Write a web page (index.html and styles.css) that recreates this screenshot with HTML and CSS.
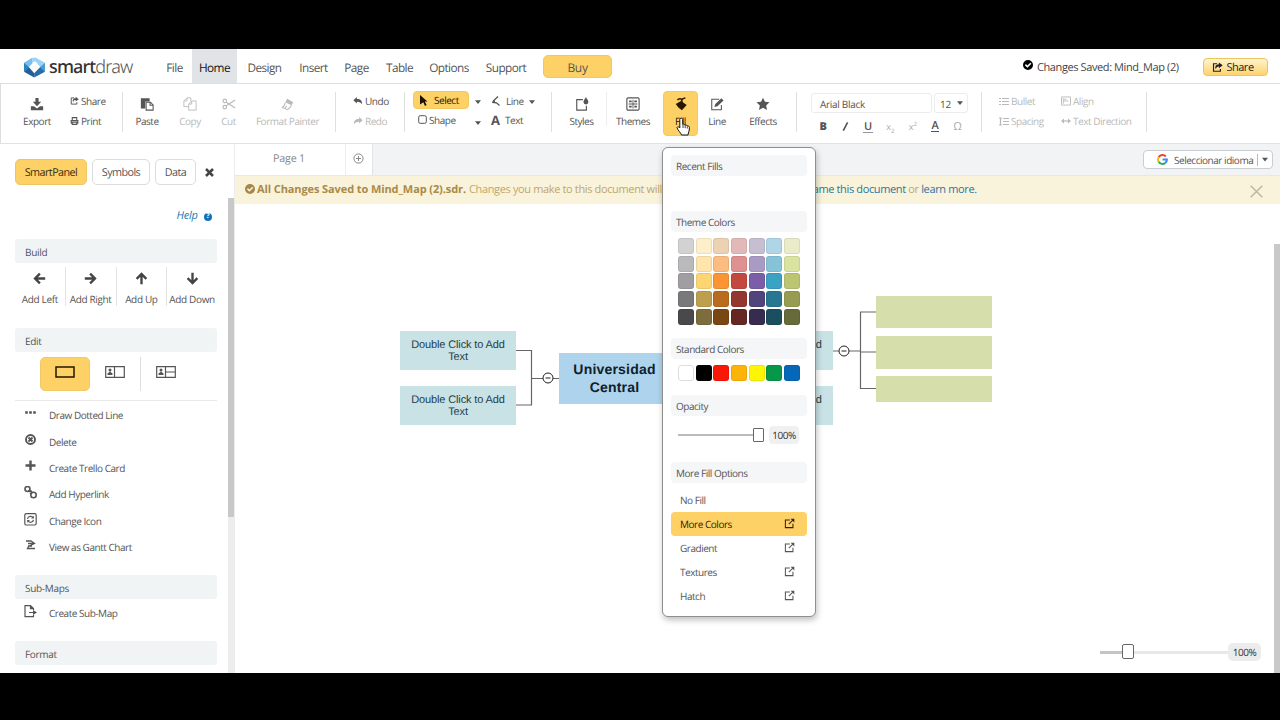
FILE: index.html
```html
<!DOCTYPE html>
<html lang="en">
<head>
<meta charset="utf-8">
<title>SmartDraw - Mind_Map (2)</title>
<link rel="stylesheet" href="styles.css">
</head>
<body>
<svg class="defs" width="0" height="0">
  <symbol id="share" viewBox="0 0 16 16"><path d="M7.5 2.5H2.2v11h10V10" fill="none" stroke="currentColor" stroke-width="1.7"/><path d="M10 .6l5.6 4.2L10 9V6.4C7.5 6.4 6 7.5 5.7 10.6 3.6 6.800 5.5 3.300 10 3.200z" fill="currentColor"/></symbol>
  <symbol id="open" viewBox="0 0 16 16"><path d="M8.500 3H2v11h11V8.500M7 9l7-7" fill="none" stroke="currentColor" stroke-width="1.500"/><path d="M9.500 1H15v5.500z" fill="currentColor"/></symbol>
  <symbol id="check" viewBox="0 0 16 16"><path fill-rule="evenodd" d="M8 0a8 8 0 100 16A8 8 0 008 0zM7 12.200L3 8.200l1.700-1.700L7 8.800l4.700-4.600 1.700 1.700z" fill="currentColor"/></symbol>
  <symbol id="minus" viewBox="0 0 12 12"><circle cx="6" cy="6" r="5" fill="#fff" stroke="#222"/><path d="M3.500 6h5" stroke="#222"/></symbol>
  <symbol id="arrow" viewBox="0 0 16 16"><path d="M8.500 2L2.500 8l6 6M3 8h12" fill="none" stroke="currentColor" stroke-width="2.900"/></symbol>
  <symbol id="caret" viewBox="0 0 8 5"><path d="M0 0h8L4 5z" fill="currentColor"/></symbol>
  <symbol id="undo" viewBox="0 0 16 14"><path d="M6 0v3.300c6.500 0 9.500 2.500 9 10-1.500-4-4-5.300-9-5.200v3.400L0 5.700z" fill="currentColor"/></symbol>
</svg>
<div class="screen">
  <header class="topbar">
    <div class="brand">
      <svg width="21" height="21" viewBox="0 0 22 21">
        <path d="M0 5.500l9-5.500v6L5 10z" fill="#77bff0"/><path d="M0 5.500L5.300 10 0 15z" fill="#2d83bd"/><path d="M0 15l5-5 5.700 6.500V21z" fill="#205f98"/>
        <path d="M22 5.500L12 0 9 .5V5l3-1 5 6z" fill="#9bd3f6"/><path d="M22 5.500L16.700 10l5.300 5z" fill="#4a9ed6"/><path d="M22 15l-5-5-6.300 6.500V21z" fill="#286da8"/>
      </svg>
      <span class="word"><b>smart</b>draw</span>
    </div>
    <nav class="menu">
      <a class="w35">File</a><a class="w45 on">Home</a><a class="w55">Design</a><a class="w43">Insert</a><a class="w43">Page</a><a class="w43">Table</a><a class="w56">Options</a><a class="w58">Support</a>
    </nav>
    <a class="buy">Buy</a>
    <div class="saved"><svg width="10" height="10"><use href="#check"/></svg><span>Changes Saved: Mind_Map (2)</span></div>
    <a class="share-btn"><svg width="11" height="11"><use href="#share"/></svg>Share</a>
  </header>

  <div class="ribbon">
    <div class="tile t-export"><svg width="14" height="14" viewBox="0 0 16 16"><path d="M6.200 1h3.600v4.500h3L8 10.500l-4.800-5h3zM1 10.500h3.500L8 13l3.500-2.500H15V15H1z" fill="currentColor"/></svg>Export</div>
    <div class="stack s-share">
      <span><svg width="9" height="10"><use href="#share"/></svg>Share</span>
      <span><svg width="9" height="10" viewBox="0 0 16 16"><path d="M4 7V2h8v5M2 12V7h12v5h-2M4 10h8v4H4zM2 12h2" fill="none" stroke="currentColor" stroke-width="1.900"/></svg>Print</span>
    </div>
    <i class="sep"></i>
    <div class="tile t-paste"><svg width="14" height="14" viewBox="0 0 16 16"><path d="M1 1.500h10V5H6v8H1z" fill="currentColor"/><path d="M7 6h5l3 3v6H7zM11.500 6v3.500H15" fill="#fff" stroke="currentColor" stroke-width="1.200"/></svg>Paste</div>
    <div class="tile t-copy dim"><svg width="14" height="14" viewBox="0 0 16 16"><path d="M6 11H1V4.500L4.500 1H9v4M4.500 1v3.500H1M6.500 8L10 4.500h5V15H6.500zM10 4.500V8H6.500" fill="none" stroke="currentColor"/></svg>Copy</div>
    <div class="tile t-cut dim"><svg width="14" height="14" viewBox="0 0 16 16"><path d="M15 3.500L5 10M15 12.500L5 6" stroke="currentColor" stroke-width="1.400"/><circle cx="3.200" cy="4.500" r="2" fill="none" stroke="currentColor" stroke-width="1.300"/><circle cx="3.200" cy="11.500" r="2" fill="none" stroke="currentColor" stroke-width="1.300"/></svg>Cut</div>
    <div class="tile t-painter dim"><svg width="14" height="14" viewBox="0 0 16 16"><path d="M7 2l7 4-2 3.500L5 6z" fill="currentColor"/><path d="M5 6.500C4.500 9 3 11 1.500 12l6 2.500C9.500 13 11 11.500 12 9.500M4.500 13l2-2.500" fill="none" stroke="currentColor" stroke-width="1.200"/></svg>Format Painter</div>
    <i class="sep"></i>
    <div class="stack s-undo">
      <span><svg width="10" height="8"><use href="#undo"/></svg>Undo</span>
      <span class="dim"><svg class="mirror" width="10" height="8"><use href="#undo"/></svg>Redo</span>
    </div>
    <i class="sep"></i>
    <div class="tools">
      <span class="select"><svg width="8" height="11" viewBox="0 0 8 11"><path d="M0 0l7.500 6.500H4.800L6.600 10 5 11 3.300 7.300 0 9.500z" fill="#1a1000"/></svg>Select</span>
      <svg class="dd" width="6" height="4"><use href="#caret"/></svg>
      <span class="tl"><svg width="10" height="10" viewBox="0 0 10 10"><path d="M7 .5L2.500 4.800 2 6.500l3.500.3 3 2.700" fill="none" stroke="currentColor" stroke-width="1.300"/><path d="M.8 6.800l2.500-3.300 1.200 3.600z" fill="currentColor"/></svg>Line</span>
      <svg class="dd" width="6" height="4"><use href="#caret"/></svg>
      <span class="shape"><svg width="9" height="9" viewBox="0 0 9 9"><rect x=".7" y=".7" width="7.600" height="7.600" rx="1.500" fill="none" stroke="currentColor"/></svg>Shape</span>
      <svg class="dd low" width="6" height="4"><use href="#caret"/></svg>
      <span class="tl"><b class="bigA">A</b>Text</span>
    </div>
    <i class="sep"></i>
    <div class="tile t-styles"><svg width="14" height="14" viewBox="0 0 16 16"><path d="M9 3H2v12h11v-5" fill="none" stroke="currentColor" stroke-width="1.300"/><path d="M12.500 0c1 2.500 2.800 3.500 2.800 5.700a2.800 2.800 0 01-5.600 0C9.700 3.500 11.500 2.500 12.500 0z" fill="currentColor"/></svg>Styles</div>
    <i class="sep short"></i>
    <div class="tile t-themes"><svg width="14" height="14" viewBox="0 0 16 16"><rect x="1" y="1" width="14" height="14" rx="1.500" fill="none" stroke="currentColor" stroke-width="1.300"/><path d="M3.500 4h3v2h-3zM9.500 4h3v2h-3zM3.500 10h3v2h-3zM9.500 10h3v2h-3zM7.500 3h1v10h-1zM3 7.500h10v1H3z" fill="currentColor"/></svg>Themes</div>
    <div class="tile t-fill"><svg width="14" height="14" viewBox="0 0 16 16"><path d="M2 8l6-3.500L14.500 9 9 15l-4-3z" fill="currentColor"/><path d="M9 7V4c0-3-4-2.500-5-.5M9 4c0-2 2-3 4-2.500" fill="none" stroke="currentColor" stroke-width="1.700"/></svg>Fill</div>
    <div class="tile t-line"><svg width="14" height="14" viewBox="0 0 16 16"><path d="M10.500 2.500H2v12h11V9" fill="none" stroke="currentColor" stroke-width="1.200"/><path d="M5 11.500l1-3.500 7-6.500L15.500 4l-7 6.500zM6 8l2.500 2.500" fill="currentColor"/></svg>Line</div>
    <div class="tile t-effects"><svg width="14" height="14" viewBox="0 0 16 16"><path d="M8 .8l2.200 4.700 5.200.6-3.800 3.600 1 5.200L8 12.400l-4.600 2.500 1-5.200L.6 6.100l5.200-.6z" fill="currentColor"/></svg>Effects</div>
    <i class="sep"></i>
    <div class="fonts">
      <div class="pick"><span class="fam">Arial Black</span><span class="size">12<svg width="6" height="4"><use href="#caret"/></svg></span></div>
      <div class="fmt"><b>B</b><span><svg class="slash" width="7" height="9" viewBox="0 0 7 9"><path d="M1.300 8.700L5.600.4" stroke="currentColor" stroke-width="1.600"/></svg></span><span class="un">U</span><span class="lo">x<sub>2</sub></span><span class="lo">x<sup>2</sup></span><span class="ac">A</span><span class="om">Ω</span></div>
    </div>
    <i class="sep"></i>
    <div class="para dim">
      <span><svg width="10" height="9" viewBox="0 0 10 9"><path d="M0 1.500h2M0 4.500h2M0 7.500h2M3 1.500h7M3 4.500h7M3 7.500h7" stroke="currentColor" stroke-width="1.200"/></svg>Bullet</span>
      <span><svg width="10" height="10" viewBox="0 0 11 10"><path d="M.5.500h10v9H.5zM2.500 2v6M3 5h5M3 3h3" fill="none" stroke="currentColor"/></svg>Align</span>
      <span><svg width="10" height="9" viewBox="0 0 10 9"><path d="M0 1h3M0 8h3M1.500 1v7M4 1.500h6M4 4.500h6M4 7.500h6" stroke="currentColor" stroke-width="1.200"/></svg>Spacing</span>
      <span><svg width="10" height="6" viewBox="0 0 10 6"><path d="M1 3h8" stroke="currentColor" stroke-width="1.200"/><path d="M0 3l3-2.500v5zM10 3L7 .5v5z" fill="currentColor"/></svg>Text Direction</span>
    </div>
    <i class="sep"></i>
  </div>

  <div class="body">
    <aside class="panel">
      <div class="panel-in">
        <div class="tabs"><a class="on w72">SmartPanel</a><a class="w58">Symbols</a><a class="w41">Data</a><svg width="9" height="9" viewBox="0 0 9 9"><path d="M1 1l7 7M8 1L1 8" stroke="#444" stroke-width="2.500"/></svg></div>
        <div class="help">Help <b>?</b></div>
        <h3>Build</h3>
        <div class="adds">
          <div><svg width="13" height="13"><use href="#arrow"/></svg>Add Left</div>
          <div><svg class="r180" width="13" height="13"><use href="#arrow"/></svg>Add Right</div>
          <div><svg class="r90" width="13" height="13"><use href="#arrow"/></svg>Add Up</div>
          <div><svg class="r270" width="13" height="13"><use href="#arrow"/></svg>Add Down</div>
        </div>
        <h3>Edit</h3>
        <div class="kinds">
          <div class="on"><svg width="20" height="12" viewBox="0 0 20 12"><path d="M1 1h18v10H1z" fill="none" stroke="#221800" stroke-width="1.500"/></svg></div>
          <div><svg width="20" height="12" viewBox="0 0 20 12"><path d="M.7.7h18.600v10.600H.7zM9.500.7v10.600" fill="none" stroke="#555" stroke-width="1.200"/><circle cx="5" cy="4" r="1.500" fill="#555"/><path d="M2.500 9V7.500L5 5.500l2.500 2V9z" fill="#555"/></svg></div>
          <div class="last"><svg width="20" height="12" viewBox="0 0 20 12"><path d="M.7.7h18.600v10.600H.7zM9.500.7v10.600M9.500 6h10" fill="none" stroke="#555" stroke-width="1.200"/><circle cx="5" cy="4" r="1.500" fill="#555"/><path d="M2.500 9V7.500L5 5.500l2.500 2V9z" fill="#555"/></svg></div>
        </div>
        <ul class="acts">
          <li><svg width="13" height="13" viewBox="0 0 13 13"><path d="M1.200 5.500h2.600M5.200 5.500h2.600M9.200 5.500h2.600" stroke="currentColor" stroke-width="2.400"/></svg>Draw Dotted Line</li>
          <li><svg width="13" height="13" viewBox="0 0 13 13"><circle cx="6.500" cy="5.500" r="4.500" fill="none" stroke="currentColor" stroke-width="1.900"/><path d="M4.500 3.500l4 4M8.500 3.500l-4 4" stroke="currentColor" stroke-width="1.800"/></svg>Delete</li>
          <li><svg width="13" height="13" viewBox="0 0 13 13"><path d="M6.500.5v10M1.500 5.500h10" stroke="currentColor" stroke-width="2.400"/></svg>Create Trello Card</li>
          <li><svg width="13" height="13" viewBox="0 0 13 13"><g fill="none" stroke="currentColor" stroke-width="1.600"><circle cx="3.500" cy="3" r="2.500"/><circle cx="9.500" cy="9" r="2.700"/><path d="M4.500 4l2 2M6 8l2-1.500M6.500 4.500L8 6"/></g></svg>Add Hyperlink</li>
          <li><svg width="13" height="13" viewBox="0 0 13 13"><g fill="none" stroke="currentColor" stroke-width="1.200"><rect x=".8" y=".6" width="11.400" height="11.400" rx="1.500"/><path d="M3.500 5.800C4 2.800 8 2.600 9.200 4.800M9.500 6.800c-.5 3-4.500 3.200-5.700 1"/></g><path d="M9.800 2.800v2.800H7zM3.200 9.800V7H6z" fill="currentColor"/></svg>Change Icon</li>
          <li><svg width="13" height="13" viewBox="0 0 13 13"><path d="M2 2h5.500M4 4.500h6M4 7h4M5 9.500h6M7 2l3.500 2.500L4.500 7.500 3.500 9.500H6" fill="none" stroke="currentColor" stroke-width="1.300"/></svg>View as Gantt Chart</li>
        </ul>
        <h3 class="sub">Sub-Maps</h3>
        <ul class="acts one">
          <li><svg width="13" height="13" viewBox="0 0 13 13"><path d="M9.500 5V3.500L6.500.6H1v11h8.500V10M6.500.6v3h3M5 7.500h5" fill="none" stroke="currentColor" stroke-width="1.200"/><path d="M9 5l4 2.500L9 10z" fill="currentColor"/></svg>Create Sub-Map</li>
        </ul>
        <h3 class="fmt-h">Format</h3>
      </div>
      <div class="rail"><div class="thumb"></div></div>
    </aside>

    <main class="work">
      <div class="pages">
        <div class="page-tab"><span>Page 1</span><span class="plus"><svg width="11" height="11" viewBox="0 0 11 11"><circle cx="5.500" cy="5.500" r="4.600" fill="none" stroke="#888"/><path d="M5.500 3v5M3 5.500h5" stroke="#888"/></svg></span></div>
        <div class="lang"><svg width="11" height="11" viewBox="0 0 11 11"><g fill="none" stroke-width="2"><path d="M8.800 2.500A4.400 4.400 0 001.700 3.200" stroke="#ea4335"/><path d="M1.700 3.200a4.400 4.400 0 000 4.600" stroke="#fbbc05"/><path d="M1.700 7.800a4.400 4.400 0 006.600 1.100" stroke="#34a853"/><path d="M8.300 8.900A4.400 4.400 0 009.900 5.500H5.600" stroke="#4285f4"/></g></svg><span>Seleccionar idioma</span><i></i><svg width="6" height="5"><use href="#caret"/></svg></div>
      </div>
      <div class="notice">
        <svg width="10" height="10"><use href="#check"/></svg>
        <b>All Changes Saved to Mind_Map (2).sdr.</b><span class="n1">Changes you make to this document will be saved.</span><span class="n2"><em>Rename this document</em> or <em>learn more.</em></span>
        <svg class="x" width="13" height="13" viewBox="0 0 13 13"><path d="M.7.7l11.600 11.600M12.300.7L.7 12.300" stroke="#bdb8a0" stroke-width="1.500"/></svg>
      </div>
      <div class="canvas">
        <svg class="wires" width="1040" height="468"><path d="M281 146.500h15.500v54.500h-15.500M296.500 174.500h28M598 147h28M641 184.500h-15.500v-76.500h15.500M625.500 148h15.500" fill="none" stroke="#666" stroke-width="1.200"/></svg>
        <div class="node teal a">Double Click to Add Text</div>
        <div class="node teal b">Double Click to Add Text</div>
        <div class="node root">Universidad Central</div>
        <div class="node teal c">Double Click to Add Text</div>
        <div class="node teal d">Double Click to Add Text</div>
        <div class="node green e"></div><div class="node green f"></div><div class="node green g"></div>
        <svg class="col m1" width="12" height="12"><use href="#minus"/></svg>
        <svg class="col m2" width="12" height="12"><use href="#minus"/></svg>
        <div class="zoom"><div class="track"><i></i></div><span>100%</span></div>
        <div class="vbar"></div>
      </div>
    </main>
  </div>

  <div class="fillmenu">
    <h4>Recent Fills</h4>
    <h4 class="h-theme">Theme Colors</h4>
    <div class="sw">
      <i style="background:#d2d2d3"></i><i style="background:#fdefc9"></i><i style="background:#ecd2b3"></i><i style="background:#e3b8b8"></i><i style="background:#c6bfd1"></i><i style="background:#aed6e7"></i><i style="background:#e9ebc9"></i>
      <i style="background:#bab9bc"></i><i style="background:#fde5ab"></i><i style="background:#fcbd83"></i><i style="background:#df9090"></i><i style="background:#aa9bc5"></i><i style="background:#86c3d9"></i><i style="background:#dbe3a0"></i>
      <i style="background:#a09da3"></i><i style="background:#fdd573"></i><i style="background:#fb9432"></i><i style="background:#c44740"></i><i style="background:#7c5da7"></i><i style="background:#3aa3c4"></i><i style="background:#bcc572"></i>
      <i style="background:#79797b"></i><i style="background:#bd9f4d"></i><i style="background:#bb6b1e"></i><i style="background:#943630"></i><i style="background:#51437b"></i><i style="background:#287792"></i><i style="background:#979c51"></i>
      <i style="background:#49494b"></i><i style="background:#7d6c3c"></i><i style="background:#794713"></i><i style="background:#652724"></i><i style="background:#372c50"></i><i style="background:#1b4e60"></i><i style="background:#676a39"></i>
    </div>
    <h4 class="h-std">Standard Colors</h4>
    <div class="sw std"><i class="white"></i><i style="background:#000"></i><i style="background:#fb1705"></i><i style="background:#fdb307"></i><i style="background:#fdf602"></i><i style="background:#079748"></i><i style="background:#0667b9"></i></div>
    <h4 class="h-op">Opacity</h4>
    <div class="opacity"><div class="otrack"><i></i></div><span>100%</span></div>
    <h4 class="h-more">More Fill Options</h4>
    <div class="opts">
      <div>No Fill</div>
      <div class="on">More Colors<svg width="11" height="11"><use href="#open"/></svg></div>
      <div>Gradient<svg width="11" height="11"><use href="#open"/></svg></div>
      <div>Textures<svg width="11" height="11"><use href="#open"/></svg></div>
      <div>Hatch<svg width="11" height="11"><use href="#open"/></svg></div>
    </div>
  </div>
  <svg class="cursor" width="15" height="19" viewBox="0 0 15 19"><path d="M4.500 1.500c1.500-.8 2.200.2 2.200 1v5c1-.8 2 0 2.200.7 1-.6 2 0 2.200.8 1.500-.5 2.300.5 2.300 1.500 0 4-1 4.500-1.400 7.500H5.500C5 16 1.500 13 1 10.500c.8-1.500 2-.5 2.800.5V2.500c0-.5.200-.8.7-1z" fill="#fff" stroke="#111"/><path d="M7 8v3M9.200 8.500v2.700M11.300 9.500v2" stroke="#111" stroke-width=".8"/></svg>
</div>
</body>
</html>
```
FILE: styles.css
```css
* { box-sizing: border-box; }
body {
  margin: 0; width: 1280px; height: 720px; overflow: hidden; background: #000;
  font-family: "Open Sans", "Noto Sans", sans-serif; text-rendering: geometricPrecision;
  font-size: 10px; letter-spacing: -.47px; color: #555; white-space: nowrap;
}
h3, h4, ul { margin: 0; padding: 0; font-weight: 400; font-size: 10px; list-style: none; }
svg { display: block; flex: none; }
.defs { position: absolute; }
.screen { position: relative; display: flex; flex-direction: column; height: 720px; padding: 49px 0 47px; }
.dim { color: #b9b9b9; }
.w35 { width: 35px; } .w41 { width: 41px; } .w43 { width: 43px; } .w45 { width: 45px; }
.w55 { width: 55px; } .w56 { width: 56px; } .w58 { width: 58px; } .w72 { width: 72px; }

/* top bar */
.topbar { display: flex; flex: none; height: 35px; background: #fff; border-bottom: 1px solid #dcdee0; }
.brand { display: flex; align-items: center; width: 157px; padding: 3px 0 0 24px; gap: 4px; }
.word { font-family: "Noto Sans", sans-serif; font-size: 18px; line-height: 20px; letter-spacing: -.85px; color: #555; font-weight: 300; padding-bottom: 2px; }
.word b { font-weight: 500; color: #333; }
.menu { display: flex; width: 386px; }
.menu a { text-align: center; line-height: 38px; height: 34px; font-size: 11.800px; letter-spacing: -.57px; }
.menu .on { background: #e1e4e6; color: #111; }
.buy { width: 69px; height: 23px; margin-top: 6px; border-radius: 5px; background: #fed166; border: 1px solid #f3c75d; text-align: center; line-height: 23px; font-size: 12px; letter-spacing: -.3px; }
.saved { display: flex; width: 571px; height: 34px; padding-left: 411px; gap: 4px; font-size: 11px; line-height: 38px; letter-spacing: -.4px; color: #444; }
.saved svg { margin-top: 11px; color: #000; }
.share-btn { display: flex; align-items: center; justify-content: center; gap: 3px; width: 65px; height: 18px; margin: 9px 0 0 20px; border: 1px solid #ecc45f; border-radius: 4px; background: linear-gradient(#fff3cf, #fdd46e); color: #222; font-size: 11px; padding-right: 5px; }

/* ribbon */
.ribbon { display: flex; flex: none; height: 60px; background: #fff; border-bottom: 1px solid #e0e2e4; border-left: 1px solid #ddd; padding-top: 7px; }
.tile { display: flex; flex-direction: column; align-items: center; height: 45px; padding-top: 6px; gap: 3px; line-height: 14px; }
.sep { width: 1px; height: 40px; margin-top: 1px; background: #dedfe0; }
.sep.short { height: 34px; background: #eee; }
.t-export { width: 72px; }
.stack { display: flex; flex-direction: column; gap: 6px; padding-top: 3px; }
.stack span { display: flex; align-items: center; gap: 2px; height: 14px; }
.s-share { width: 49px; margin-left: -3px; }
.s-share + .sep { margin-left: 3px; }
.t-paste { width: 48px; }
.t-copy { width: 38px; }
.t-cut { width: 39px; }
.t-painter { width: 79px; margin-right: 8px; }
.s-undo { width: 68px; padding-left: 17px; }
.mirror { transform: scaleX(-1); }
.tools { display: grid; grid-template-columns: 56px 18px 36px 17px; grid-template-rows: 18px 21px; width: 146px; padding-left: 8px; align-items: center; justify-content: start; }
.tools span { display: flex; align-items: center; gap: 3px; }
.tools .select { height: 18px; padding-left: 6px; gap: 6px; border-radius: 4px; background: #fed166; border: 1px solid #f5c95e; color: #221800; }
.tools .shape { padding-left: 5px; gap: 2px; }
.tools .tl { padding-left: 4px; gap: 5px; padding-top: 1px; }
.dd { justify-self: center; margin-top: 3px; }
.dd.low { margin-top: 6px; }
.bigA { width: 10px; font-size: 13px; line-height: 14px; }
.t-styles { width: 59px; margin-right: -5px; }
.t-themes { width: 52px; }
.t-fill { width: 35px; margin-left: 4px; border-radius: 4px; background: #fed166; border: 1px solid #f5c95e; color: #2a1600; padding-top: 5px; }
.t-line { width: 38px; }
.t-effects { width: 54px; margin-right: 6px; }
.fonts { width: 184px; padding: 2px 0 0 14px; }
.pick { display: flex; gap: 2px; }
.pick span { height: 20px; border: 1px solid #ececec; border-radius: 3px; line-height: 20px; letter-spacing: -.3px; }
.fam { width: 121px; padding-left: 8px; }
.pick .size { display: flex; width: 34px; padding: 0 4px 0 5px; justify-content: space-between; }
.size svg { margin-top: 7px; }
.fmt { display: grid; grid-template-columns: repeat(7, 22.400px); margin: 6px 0 0 1px; height: 15px; line-height: 15px; font-size: 11px; letter-spacing: 0; font-weight: 700; text-align: center; }
.slash { margin: 3px auto 0; }
.fmt .un { justify-self: center; font-weight: 600; border-bottom: 1px solid #999; height: 14px; padding: 0 1px; }
.ac { border-bottom: 1.500px solid #555; justify-self: center; line-height: 12px; height: 12px; margin-top: 1px; width: 8px; font-weight: 600; }
.lo { font-weight: 400; font-size: 9px; color: #aaa; }
.lo sub, .lo sup { font-size: 6px; line-height: 0; }
.om { font-weight: 400; color: #aaa; }
.para { display: grid; grid-template-columns: 62px 80px; grid-template-rows: 14px 14px; row-gap: 6px; width: 164px; padding: 3px 0 0 17px; }
.para span { display: flex; align-items: center; gap: 2px; }

/* side panel */
.body { display: flex; flex: 1; min-height: 0; background: #fff; }
.panel { display: flex; flex: none; width: 235px; border-right: 1px solid #ececec; overflow: hidden; }
.panel-in { width: 228px; padding: 15px 11px 0 15px; height: 529px; overflow: hidden; }
.tabs { display: flex; align-items: center; gap: 5px; }
.tabs a { height: 26px; border: 1px solid #dcdcdc; border-radius: 5px; text-align: center; line-height: 25px; font-size: 10.800px; letter-spacing: -.55px; }
.tabs .on { background: #fed166; border-color: #edc563; color: #3a2c0c; }
.tabs svg { margin-left: 4px; }
.help { margin: 24px 5px 16px; height: 14px; line-height: 14px; text-align: right; font-size: 11px; letter-spacing: -.3px; font-style: italic; color: #1c7ab0; }
.help b { display: inline-block; width: 8px; height: 8px; margin-left: 4px; border-radius: 50%; background: #1173b5; color: #fff; font: 700 7px/8px "Open Sans"; letter-spacing: 0; text-align: center; vertical-align: 1px; }
.panel h3 { height: 24px; width: 202px; padding-left: 10px; line-height: 26px; border-radius: 3px; background: #f1f4f5; letter-spacing: -.3px; }
.adds { display: flex; width: 202px; margin: 4px 0 22px; }
.adds div { display: flex; flex-direction: column; align-items: center; flex: 1; height: 39px; padding-top: 5px; gap: 7px; line-height: 14px; border-right: 1px solid #e4e4e4; letter-spacing: -.35px; }
.adds div:last-child { border: 0; }
.adds svg { color: #444; }
.r180 { transform: rotate(180deg); } .r90 { transform: rotate(90deg); } .r270 { transform: rotate(-90deg); }
.kinds { display: flex; width: 202px; height: 49px; padding: 5px 0 0 25px; border-bottom: 1px solid #e9e9e9; }
.kinds div { width: 50px; height: 34px; display: flex; align-items: center; justify-content: center; padding-bottom: 4px; }
.kinds .on { background: #fed166; border: 1px solid #f0ca6a; border-radius: 5px; }
.kinds .last { border-left: 1px solid #dedede; }
.acts { padding: 1px 0 0 9px; }
.acts li { display: flex; align-items: center; gap: 12px; height: 26.400px; }
.acts svg { margin-top: -3px; }
.panel h3.sub { margin-top: 14.600px; }
.acts.one { padding-top: 1px; }
.panel h3.fmt-h { margin-top: 15px; }
.rail { width: 6px; background: #ededed; margin-top: 54px; }
.thumb { height: 319px; background: #c8c8c8; }

/* workspace */
.work { display: flex; flex-direction: column; flex: 1; min-width: 0; }
.pages { display: flex; justify-content: space-between; height: 32px; background: #f2f3f5; border-bottom: 1px solid #e6e8ea; }
.page-tab { display: flex; width: 138px; background: #fff; border-right: 1px solid #e3e3e3; line-height: 30px; font-size: 10.800px; letter-spacing: -.2px; color: #888; }
.page-tab span:first-child { width: 111px; border-right: 1px solid #eee; text-align: center; padding-right: 2px; }
.plus { padding: 9px 0 0 7px; }
.lang { display: flex; align-items: center; width: 130px; height: 19px; margin: 6px 7px 0 0; padding-left: 13px; border: 1px solid #c9ced3; border-radius: 4px; background: #fff; gap: 6px; }
.lang i { width: 1px; height: 12px; background: #bbb; margin: 0 -2px 0 -2px; }
.notice { display: flex; flex: none; height: 28px; padding-left: 10px; background: #f9f3db; line-height: 28px; font-size: 11px; letter-spacing: -.36px; color: #bfa66c; }
.notice svg { margin: 8px 2px 0 0; color: #a58746; }
.notice b { width: 212px; color: #a98a49; letter-spacing: -.1px; }
.n1 { width: 325px; }
.n2 em { font-style: normal; color: #2a77a0; }
.notice .x { margin: 9px 17px 0 auto; }
.canvas { position: relative; flex: 1; background: #fff; }
.wires { position: absolute; left: 0; top: 0; }
.node { position: absolute; white-space: normal; text-align: center; font-family: "Liberation Sans", Arial, sans-serif; }
.teal { width: 116px; height: 39px; padding: 8px 6px 0; background: #c9e2e6; color: #264047; font-size: 11px; line-height: 12px; letter-spacing: -.13px; }
.root { left: 324px; top: 149px; width: 116px; height: 51px; padding: 7px 10px 0 5px; background: #aed3ed; color: #10202c; font-weight: 700; font-size: 14px; line-height: 18px; letter-spacing: .2px; }
.green { left: 641px; width: 116px; height: 32px; background: #d6deac; }
.a { left: 165px; top: 127px; } .b { left: 165px; top: 182px; }
.c { left: 482px; top: 127px; } .d { left: 482px; top: 182px; }
.e { top: 92px; } .f { top: 132px; height: 33px; } .g { top: 172px; height: 26px; }
.col { position: absolute; }
.m1 { left: 307px; top: 168px; } .m2 { left: 603px; top: 141px; }
.zoom { position: absolute; right: 19px; bottom: 12px; display: flex; align-items: center; height: 18px; }
.track { width: 128px; height: 3px; background: linear-gradient(90deg, #c4c4c4 28px, #e8e8e8 28px); }
.track i { display: block; width: 12px; height: 15px; margin: -7px 0 0 22px; background: #fff; border: 1px solid #666; border-radius: 2px; }
.zoom span { width: 33px; height: 18px; line-height: 18px; border-radius: 5px; background: #ececec; text-align: center; color: #333; }
.vbar { position: absolute; right: 0; top: 40px; bottom: 0; width: 6px; background: #c9c9c9; }

/* fill menu */
.fillmenu { position: absolute; left: 662px; top: 147px; width: 154px; height: 470px; padding: 7px 8px 0; background: #fff; border: 1px solid #8e8e8e; border-radius: 6px; box-shadow: 1px 3px 6px rgba(0,0,0,.25); }
.fillmenu h4 { height: 21px; line-height: 22px; padding-left: 5px; border-radius: 4px; background: #f5f6f7; }
.fillmenu .h-theme { margin-top: 35px; }
.sw { display: grid; grid-template-columns: repeat(7, 16px); gap: 1.700px; padding: 6px 0 0 7px; }
.sw i { height: 16px; border-radius: 3px; box-shadow: inset 0 0 0 1px rgba(0,0,0,.07); }
.sw .white { border: 1px solid #ddd; background: #fff; box-shadow: none; }
.fillmenu .h-std { margin-top: 13px; }
.fillmenu .h-op { margin-top: 14px; }
.opacity { display: flex; align-items: center; height: 18px; margin: 10px 0 0 7px; }
.otrack { width: 91px; height: 2px; background: linear-gradient(90deg, #bbb 86px, transparent 86px); }
.otrack i { display: block; width: 11px; height: 14px; margin: -6px 0 0 75px; background: #fff; border: 1px solid #666; border-radius: 1px; }
.opacity span { width: 30px; height: 18px; line-height: 18px; background: #eff0f1; border-radius: 4px; text-align: center; color: #333; }
.fillmenu .h-more { margin-top: 18px; }
.opts { padding-top: 5px; }
.opts div { display: flex; align-items: center; justify-content: space-between; height: 24px; padding: 0 12px 0 9px; border-radius: 4px; }
.opts svg { margin-top: -1px; }
.opts .on { background: #fed166; color: #33230a; }
.cursor { position: absolute; left: 676px; top: 117px; }
```
